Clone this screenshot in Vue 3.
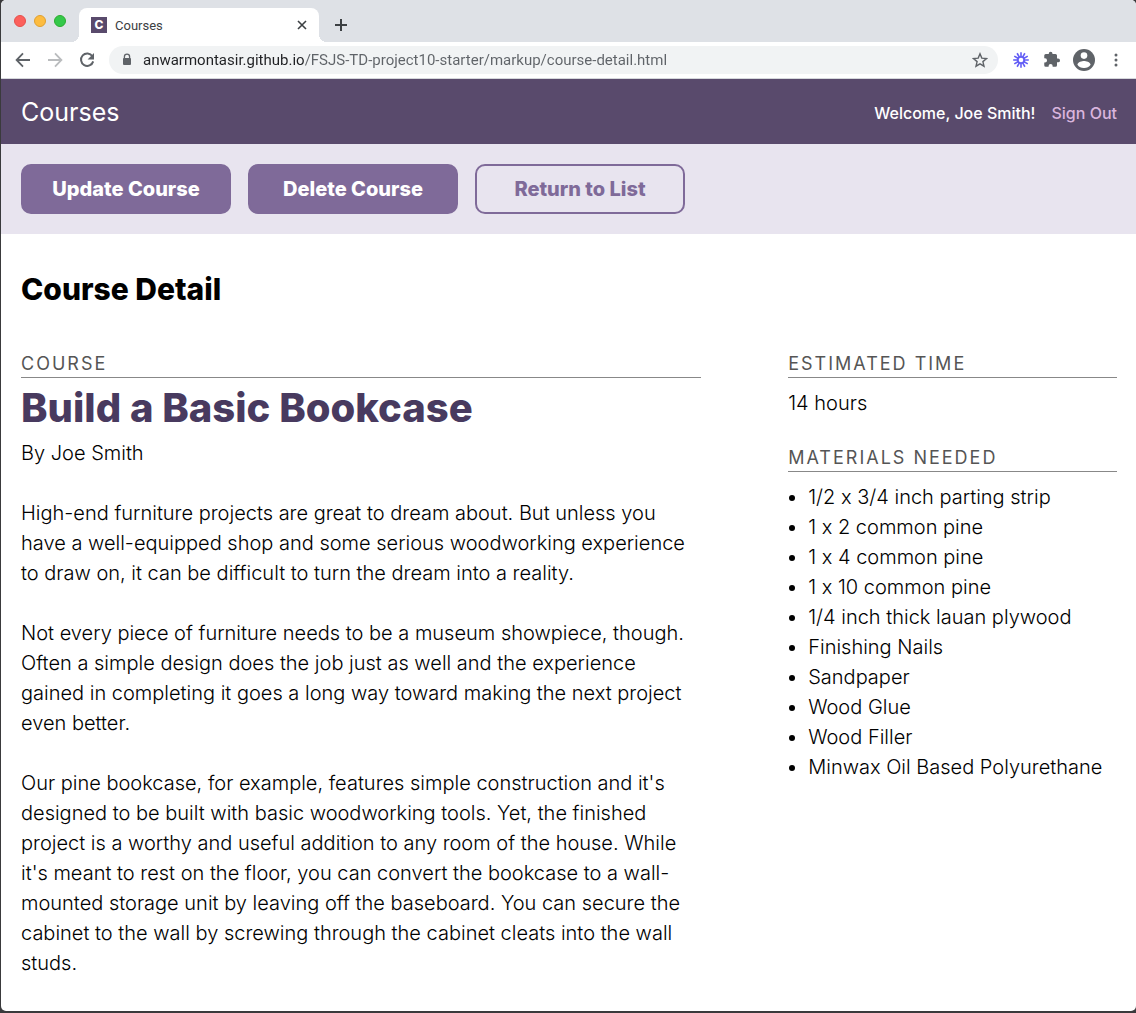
<script setup>
import { ref } from 'vue'

const address = ref('anwarmontasir.github.io/FSJS-TD-project10-starter/markup/course-detail.html')

const paragraphs = [
  'High-end furniture projects are great to dream about. But unless you have a well-equipped shop and some serious woodworking experience to draw on, it can be difficult to turn the dream into a reality.',
  'Not every piece of furniture needs to be a museum showpiece, though. Often a simple design does the job just as well and the experience gained in completing it goes a long way toward making the next project even better.',
  "Our pine bookcase, for example, features simple construction and it's designed to be built with basic woodworking tools. Yet, the finished project is a worthy and useful addition to any room of the house. While it's meant to rest on the floor, you can convert the bookcase to a wall-mounted storage unit by leaving off the baseboard. You can secure the cabinet to the wall by screwing through the cabinet cleats into the wall studs."
]

const materials = [
  '1/2 x 3/4 inch parting strip',
  '1 x 2 common pine',
  '1 x 4 common pine',
  '1 x 10 common pine',
  '1/4 inch thick lauan plywood',
  'Finishing Nails',
  'Sandpaper',
  'Wood Glue',
  'Wood Filler',
  'Minwax Oil Based Polyurethane'
]

const rays = [0, 30, 60, 90, 120, 150, 180, 210, 240, 270, 300, 330]
</script>

<template>
  <div class="desktop">
    <div class="window">
      <div class="tabstrip">
        <div class="lights">
          <button class="light close" type="button" aria-label="Close window"></button>
          <button class="light minimise" type="button" aria-label="Minimise window"></button>
          <button class="light zoom" type="button" aria-label="Zoom window"></button>
        </div>
        <div class="tab">
          <span class="favicon">C</span>
          <span class="tab-title">Courses</span>
          <button class="icon-button tab-close" type="button" aria-label="Close tab">
            <svg width="10" height="10" viewBox="0 0 10 10"><path d="M1 1l8 8M9 1l-8 8" stroke="#3c4043" stroke-width="1.6" fill="none" /></svg>
          </button>
        </div>
        <button class="icon-button new-tab" type="button" aria-label="New tab">
          <svg width="14" height="14" viewBox="0 0 14 14"><path d="M7 1v12M1 7h12" stroke="#3c4043" stroke-width="2" fill="none" /></svg>
        </button>
      </div>

      <div class="toolbar">
        <div class="nav">
          <button class="icon-button" type="button" aria-label="Back">
            <svg width="16" height="16" viewBox="0 0 16 16"><path d="M15 8H2M8 1.4L1.6 8L8 14.6" stroke="#5f6368" stroke-width="1.8" fill="none" /></svg>
          </button>
          <button class="icon-button" type="button" aria-label="Forward" disabled>
            <svg width="16" height="16" viewBox="0 0 16 16"><path d="M1 8h13M8 1.4L14.4 8L8 14.6" stroke="#babcbe" stroke-width="1.8" fill="none" /></svg>
          </button>
          <button class="icon-button" type="button" aria-label="Reload">
            <svg width="16" height="16" viewBox="0 0 16 16">
              <path d="M13.4 4.2A6.2 6.2 0 1 0 14.2 9.4" stroke="#5f6368" stroke-width="2" fill="none" />
              <path d="M15 1v6.4H8.6z" fill="#5f6368" />
            </svg>
          </button>
        </div>
        <div class="omnibox">
          <svg width="10" height="14" viewBox="0 0 10 14">
            <path d="M2.4 6V3.7a2.6 2.6 0 0 1 5.2 0V6" stroke="#5f6368" stroke-width="1.3" fill="none" />
            <rect x="1" y="5" width="8" height="7" rx="1" fill="#5f6368" />
          </svg>
          <input v-model="address" class="address" type="text" aria-label="Address" spellcheck="false" />
          <button class="icon-button" type="button" aria-label="Bookmark this page">
            <svg width="16" height="16" viewBox="0 0 16 16"><path d="M8 1.8l1.8 4.3 4.7.4-3.6 3.1 1.1 4.6L8 11.8l-4 2.4 1.1-4.6-3.6-3.1 4.7-.4z" stroke="#5f6368" stroke-width="1.4" fill="none" /></svg>
          </button>
        </div>
        <div class="extensions">
          <button class="icon-button" type="button" aria-label="Loom">
            <svg width="16" height="16" viewBox="0 0 16 16">
              <g stroke="#625df5" stroke-width="1.6">
                <path v-for="a in rays" :key="a" d="M8 5V.2" :transform="`rotate(${a} 8 8)`" />
              </g>
              <circle cx="8" cy="8" r="3.2" stroke="#625df5" stroke-width="1.8" fill="#fff" />
            </svg>
          </button>
          <button class="icon-button" type="button" aria-label="Extensions">
            <svg width="18" height="18" viewBox="0 1 24 24"><path fill="#5f6368" d="M21.500 11H20V7a2 2 0 0 0-2-2h-4V4.500a2.500 2.500 0 0 0-5 0V5H5a2 2 0 0 0-2 2v3.800h1a2.700 2.700 0 0 1 0 5.400H3V20a2 2 0 0 0 2 2h3.800v-1a2.700 2.700 0 0 1 5.400 0v1H18a2 2 0 0 0 2-2v-4h1.500a2.500 2.500 0 0 0 0-5z" /></svg>
          </button>
          <button class="icon-button" type="button" aria-label="Profile">
            <svg width="22" height="22" viewBox="0 0 22 22">
              <circle cx="11" cy="11" r="11" fill="#5f6368" />
              <circle cx="11" cy="6.600" r="3.300" fill="#fff" />
              <path d="M4.400 15.800C4.800 13 9 12.100 11 12.100s6.200.9 6.600 3.700A8 8 0 0 1 11 19a8 8 0 0 1-6.600-3.200z" fill="#fff" />
            </svg>
          </button>
          <button class="icon-button" type="button" aria-label="Menu">
            <svg width="16" height="16" viewBox="0 0 16 16" fill="#5f6368"><circle cx="8" cy="3" r="1.500" /><circle cx="8" cy="8" r="1.500" /><circle cx="8" cy="13" r="1.500" /></svg>
          </button>
        </div>
      </div>

      <header class="site-header">
        <a class="logo" href="#">Courses</a>
        <nav class="account">
          <span>Welcome, Joe Smith!</span>
          <a class="sign-out" href="#">Sign Out</a>
        </nav>
      </header>

      <div class="actions">
        <button class="action" type="button">Update Course</button>
        <button class="action" type="button">Delete Course</button>
        <button class="action secondary" type="button">Return to List</button>
      </div>

      <main class="page">
        <h2 class="page-title">Course Detail</h2>
        <div class="columns">
          <section class="course">
            <h3 class="label">Course</h3>
            <h4 class="course-name">Build a Basic Bookcase</h4>
            <p>By Joe Smith</p>
            <p v-for="text in paragraphs" :key="text">{{ text }}</p>
          </section>
          <aside class="facts">
            <h3 class="label">Estimated Time</h3>
            <p>14 hours</p>
            <h3 class="label">Materials Needed</h3>
            <ul>
              <li v-for="item in materials" :key="item">{{ item }}</li>
            </ul>
          </aside>
        </div>
      </main>
    </div>
  </div>
</template>

<style>
body {
  background: #3a3a3c;
}
</style>

<style scoped>
* {
  box-sizing: border-box;
}

.desktop {
  display: flex;
  min-height: 100vh;
  padding: 0 0 2px 1px;
}

.window {
  flex: 1;
  min-width: 0;
  overflow: hidden;
  border-radius: 5px;
  background: #fff;
  color: #000;
  font-family: Inter, "Liberation Sans", sans-serif;
  font-variant-ligatures: no-contextual;
}

button {
  font: inherit;
  cursor: pointer;
}

svg {
  display: block;
}

.icon-button {
  padding: 0;
  border: 0;
  background: none;
}

.tabstrip {
  display: flex;
  height: 42px;
  background: #dee1e6;
}

.lights {
  display: flex;
  gap: 8px;
  padding: 15px 13px 0 13px;
}

.light {
  width: 12px;
  height: 12px;
  padding: 0;
  border: 1px solid;
  border-radius: 50%;
}

.close {
  background: #fc605c;
  border-color: #e5504c;
}

.minimise {
  background: #fdbc40;
  border-color: #e0a030;
}

.zoom {
  background: #34c84a;
  border-color: #2bac2f;
}

.tab {
  position: relative;
  display: flex;
  align-items: center;
  width: 240px;
  margin-top: 8px;
  padding: 0 12px;
  border-radius: 8px 8px 0 0;
  background: #fff;
  font: 13px Roboto, sans-serif;
  color: #3c4043;
}

/* Curved feet that join the tab to the toolbar. */
.tab::before,
.tab::after {
  content: "";
  position: absolute;
  bottom: 0;
  width: 8px;
  height: 8px;
}

.tab::before {
  right: 100%;
  background: radial-gradient(circle at 0 0, transparent 8px, #fff 8px);
}

.tab::after {
  left: 100%;
  background: radial-gradient(circle at 100% 0, transparent 8px, #fff 8px);
}

.favicon {
  width: 16px;
  margin-right: 8px;
  background: #594a6c;
  color: #fff;
  font: 800 12px/16px Inter, sans-serif;
  text-align: center;
}

.tab-title {
  flex: 1;
}

.new-tab {
  margin: 8px 0 0 15px;
}

.toolbar {
  display: flex;
  align-items: center;
  height: 37px;
  padding: 0 12px 0 14px;
  border-bottom: 1px solid #d5d7db;
}

.nav {
  display: flex;
  gap: 16px;
  margin-right: 14px;
}

.omnibox {
  display: flex;
  flex: 1;
  align-items: center;
  height: 28px;
  padding: 0 10px 0 13px;
  border-radius: 14px;
  background: #f1f3f4;
}

/* The host part is darker than the path. */
.address {
  flex: 1;
  min-width: 0;
  margin-left: 11px;
  padding: 0;
  border: 0;
  outline: 0;
  background: linear-gradient(to right, #202124 161px, #5f6368 161px);
  background-clip: text;
  color: #5f6368;
  -webkit-text-fill-color: transparent;
  font: 15px/20px Roboto, sans-serif;
}

.extensions {
  display: flex;
  align-items: center;
  gap: 13px;
  margin-left: 15px;
}

.site-header {
  display: flex;
  align-items: center;
  justify-content: space-between;
  height: 65px;
  padding: 0 19px 0 20px;
  background: #594a6c;
  color: #fff;
}

.logo {
  color: #fff;
  font-size: 25px;
  text-decoration: none;
}

.account {
  display: flex;
  gap: 16px;
  padding-top: 3px;
  font-size: 16px;
  font-weight: 500;
}

.sign-out {
  color: #d9b5dd;
  text-decoration: none;
}

.actions {
  display: flex;
  gap: 17px;
  padding: 20px;
  background: #e8e4ef;
}

.action {
  width: 210px;
  height: 50px;
  padding: 0;
  border: 2px solid #7f6a99;
  border-radius: 10px;
  background: #7f6a99;
  color: #fff;
  font-size: 20px;
  font-weight: 800;
}

.secondary {
  background: transparent;
  color: #7f6a99;
}

.page {
  padding: 35px 19px 17px 20px;
  font-size: 20px;
  font-weight: 300;
  line-height: 30px;
}

.page-title {
  margin: 0 0 44px;
  font-size: 30px;
  font-weight: 800;
  line-height: 40px;
}

.columns {
  display: flex;
  justify-content: space-between;
}

.course {
  width: 62%;
}

.facts {
  width: 30%;
}

.label {
  margin: 0;
  padding-bottom: 2px;
  border-bottom: 1px solid #888;
  color: #555;
  font-size: 18px;
  font-weight: 400;
  line-height: 22px;
  letter-spacing: 2px;
  text-transform: uppercase;
}

.course-name {
  margin: 10px 0;
  color: #483a5f;
  font-size: 40px;
  font-weight: 800;
  line-height: 40px;
}

p {
  margin: 0 0 30px;
}

.course p:last-child {
  margin-bottom: 0;
}

.facts p {
  margin: 10px 0 29px;
}

ul {
  margin: 10px 0 0;
  padding-left: 20px;
}
</style>
